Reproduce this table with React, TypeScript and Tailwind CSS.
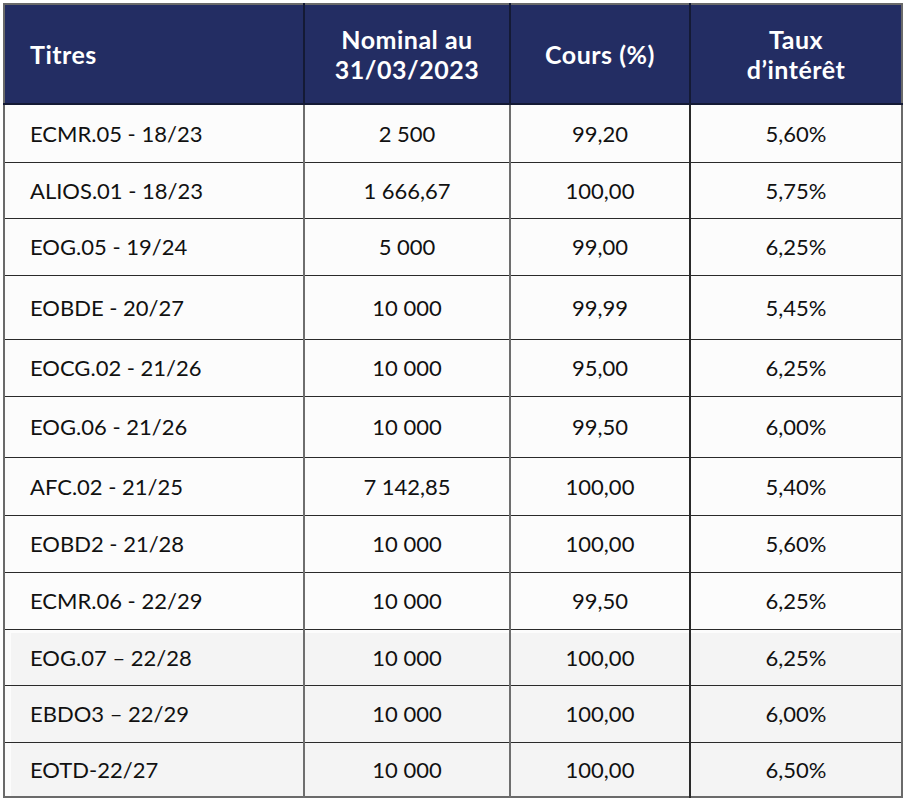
const ROWS: { titre: string; nominal: string; cours: string; taux: string; h: string; shade?: boolean }[] = [
  { titre: "ECMR.05 - 18/23", nominal: "2 500", cours: "99,20", taux: "5,60%", h: "h-[58px]" },
  { titre: "ALIOS.01 - 18/23", nominal: "1 666,67", cours: "100,00", taux: "5,75%", h: "h-[56px]" },
  { titre: "EOG.05 - 19/24", nominal: "5 000", cours: "99,00", taux: "6,25%", h: "h-[57px]" },
  { titre: "EOBDE - 20/27", nominal: "10 000", cours: "99,99", taux: "5,45%", h: "h-[64px]" },
  { titre: "EOCG.02 - 21/26", nominal: "10 000", cours: "95,00", taux: "6,25%", h: "h-[57px]" },
  { titre: "EOG.06 - 21/26", nominal: "10 000", cours: "99,50", taux: "6,00%", h: "h-[61px]" },
  { titre: "AFC.02 - 21/25", nominal: "7 142,85", cours: "100,00", taux: "5,40%", h: "h-[58px]" },
  { titre: "EOBD2 - 21/28", nominal: "10 000", cours: "100,00", taux: "5,60%", h: "h-[57px]" },
  { titre: "ECMR.06 - 22/29", nominal: "10 000", cours: "99,50", taux: "6,25%", h: "h-[57px]" },
  { titre: "EOG.07 – 22/28", nominal: "10 000", cours: "100,00", taux: "6,25%", h: "h-[56px]", shade: true },
  { titre: "EBDO3 – 22/29", nominal: "10 000", cours: "100,00", taux: "6,00%", h: "h-[57px]", shade: true },
  { titre: "EOTD-22/27", nominal: "10 000", cours: "100,00", taux: "6,50%", h: "h-[55px]", shade: true },
];

export default function App() {
  return (
    <div className="min-h-[801px] w-[904px] bg-white pl-[3px] pt-[3px] font-['Lato',sans-serif]">
      <table className="w-[898px] table-fixed border-collapse border-2 border-[#6a6a6a] text-[22px] text-[#111]">
        <colgroup>
          <col className="w-[300px]" />
          <col className="w-[206px]" />
          <col className="w-[180px]" />
          <col className="w-[212px]" />
        </colgroup>
        <thead>
          <tr className="h-[100px] bg-[#232d63] text-[25px] font-bold leading-[30px] tracking-[0.5px] text-white">
            <th className="border-b-2 border-r-2 border-[#141a35] pl-[25px] text-left">Titres</th>
            <th className="border-b-2 border-r-2 border-[#141a35] text-center">
              Nominal au
              <br />
              31/03/2023
            </th>
            <th className="border-b-2 border-r-2 border-[#141a35] text-center">Cours (%)</th>
            <th className="border-b-2 border-[#141a35] text-center">
              Taux
              <br />
              d’intérêt
            </th>
          </tr>
        </thead>
        <tbody>
          {ROWS.map((r, i) => (
            <tr
              key={r.titre}
              className={`${r.h} border-b-[1.5px] border-[#2a2a2a] ${r.shade ? "bg-[#f4f4f4]" : "bg-[#fcfcfc]"} ${i === 9 ? "shadow-[inset_0_4px_0_#fcfcfc]" : ""}`}
            >
              <td
                className={`border-r-2 border-[#6e6e6e] pl-[25px] text-left ${r.shade ? "shadow-[inset_6px_0_0_#fcfcfc]" : ""}`}
              >
                {r.titre}
              </td>
              <td className="border-r-2 border-[#6e6e6e] text-center">{r.nominal}</td>
              <td className="border-r-2 border-[#2a2a2a] text-center">{r.cours}</td>
              <td className="text-center">{r.taux}</td>
            </tr>
          ))}
        </tbody>
      </table>
    </div>
  );
}
